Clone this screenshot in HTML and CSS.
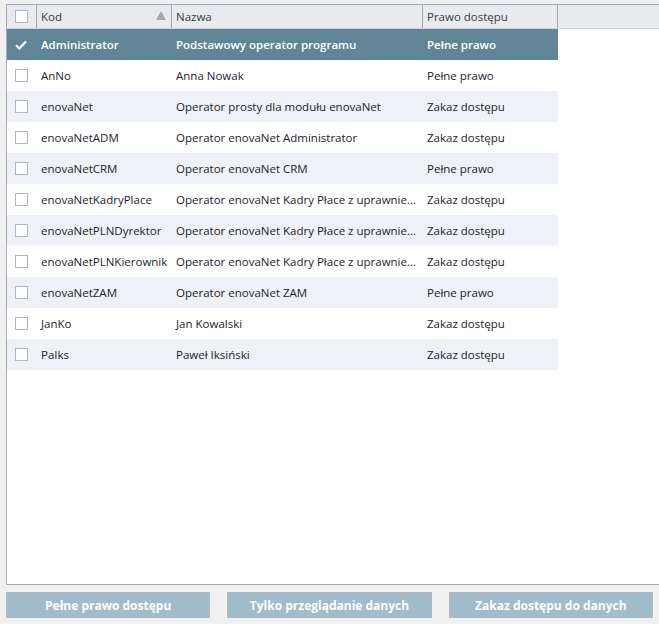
FILE: index.html
```html
<!DOCTYPE html>
<html lang="pl">
<head>
<meta charset="utf-8">
<title>Operatorzy</title>
<link rel="stylesheet" href="styles.css">
</head>
<body>
<div class="app">
  <div class="grid">
    <div class="head">
      <div class="hc c-chk"><span class="box"></span></div>
      <div class="hc c-kod">Kod<span class="sort"></span></div>
      <div class="hc c-naz">Nazwa</div>
      <div class="hc c-pra">Prawo dostępu</div>
      <div class="hc c-fill"></div>
    </div>
    <div class="body">
      <div class="row sel">
        <div class="c c-chk"><svg class="tick" width="12" height="10" viewBox="0 0 12 10"><path d="M1 5.2 L4.3 8.4 L11 1.4" fill="none" stroke="#fff" stroke-width="2.2"/></svg></div>
        <div class="c c-kod">Administrator</div>
        <div class="c c-naz">Podstawowy operator programu</div>
        <div class="c c-pra">Pełne prawo</div>
      </div>
      <div class="row">
        <div class="c c-chk"><span class="box"></span></div>
        <div class="c c-kod">AnNo</div>
        <div class="c c-naz">Anna Nowak</div>
        <div class="c c-pra">Pełne prawo</div>
      </div>
      <div class="row alt">
        <div class="c c-chk"><span class="box"></span></div>
        <div class="c c-kod">enovaNet</div>
        <div class="c c-naz">Operator prosty dla modułu enovaNet</div>
        <div class="c c-pra">Zakaz dostępu</div>
      </div>
      <div class="row">
        <div class="c c-chk"><span class="box"></span></div>
        <div class="c c-kod">enovaNetADM</div>
        <div class="c c-naz">Operator enovaNet Administrator</div>
        <div class="c c-pra">Zakaz dostępu</div>
      </div>
      <div class="row alt">
        <div class="c c-chk"><span class="box"></span></div>
        <div class="c c-kod">enovaNetCRM</div>
        <div class="c c-naz">Operator enovaNet CRM</div>
        <div class="c c-pra">Pełne prawo</div>
      </div>
      <div class="row">
        <div class="c c-chk"><span class="box"></span></div>
        <div class="c c-kod">enovaNetKadryPlace</div>
        <div class="c c-naz">Operator enovaNet Kadry Płace z uprawnieniami</div>
        <div class="c c-pra">Zakaz dostępu</div>
      </div>
      <div class="row alt">
        <div class="c c-chk"><span class="box"></span></div>
        <div class="c c-kod">enovaNetPLNDyrektor</div>
        <div class="c c-naz">Operator enovaNet Kadry Płace z uprawnieniami</div>
        <div class="c c-pra">Zakaz dostępu</div>
      </div>
      <div class="row">
        <div class="c c-chk"><span class="box"></span></div>
        <div class="c c-kod">enovaNetPLNKierownik</div>
        <div class="c c-naz">Operator enovaNet Kadry Płace z uprawnieniami</div>
        <div class="c c-pra">Zakaz dostępu</div>
      </div>
      <div class="row alt">
        <div class="c c-chk"><span class="box"></span></div>
        <div class="c c-kod">enovaNetZAM</div>
        <div class="c c-naz">Operator enovaNet ZAM</div>
        <div class="c c-pra">Pełne prawo</div>
      </div>
      <div class="row">
        <div class="c c-chk"><span class="box"></span></div>
        <div class="c c-kod">JanKo</div>
        <div class="c c-naz">Jan Kowalski</div>
        <div class="c c-pra">Zakaz dostępu</div>
      </div>
      <div class="row alt">
        <div class="c c-chk"><span class="box"></span></div>
        <div class="c c-kod">PaIks</div>
        <div class="c c-naz">Paweł Iksiński</div>
        <div class="c c-pra">Zakaz dostępu</div>
      </div>
    </div>
  </div>
  <div class="actions">
    <button class="btn">Pełne prawo dostępu</button>
    <button class="btn">Tylko przeglądanie danych</button>
    <button class="btn">Zakaz dostępu do danych</button>
  </div>
</div>
</body>
</html>
```

FILE: styles.css
```css
* { box-sizing: border-box; }
html, body { margin: 0; padding: 0; }
body {
  background: #f0f0f0;
  font-family: "Open Sans", "Noto Sans", sans-serif;
  font-size: 11.5px;
  color: #231d2c;
  width: 659px;
  height: 624px;
  overflow: hidden;
}
.app {
  display: flex;
  flex-direction: column;
  padding-top: 4px;
}
.grid {
  margin-left: 6px;
  height: 581px;
  background: #fff;
  border-top: 1px solid #a8a8b8;
  border-left: 1px solid #a8a8b8;
  border-bottom: 1px solid #a8a8b8;
  display: flex;
  flex-direction: column;
}
.head {
  display: flex;
  height: 24px;
  background: #e7eaef;
  border-bottom: 1px solid #d0d2d8;
}
.hc {
  display: flex;
  align-items: center;
  padding-left: 4px;
  border-right: 1px solid #a4a6ae;
  color: #3c3c44;
  position: relative;
}
.hc.c-fill { flex: 1; border-right: none; }
.c-chk { width: 29px; flex: none; padding-left: 8px !important; }
.c-kod { width: 135px; flex: none; }
.c-naz { width: 251px; flex: none; }
.c-pra { width: 135px; flex: none; }
.head .c-chk { width: 30px; }
.box {
  display: block;
  width: 13px;
  height: 13px;
  background: #fff;
  border: 1px solid #b4b4bc;
}
.sort {
  position: absolute;
  right: 5px;
  top: 6px;
  width: 0;
  height: 0;
  border-left: 5px solid transparent;
  border-right: 5px solid transparent;
  border-bottom: 9px solid #a8a8b0;
}
.body { display: flex; flex-direction: column; }
.row {
  display: flex;
  height: 31px;
  width: 551px;
  align-items: center;
}
.row.alt { background: #eef1f5; }
.row.sel { background: #5f8597; color: #fff; font-weight: 600; }
.c {
  padding-left: 5px;
  white-space: nowrap;
  overflow: hidden;
  text-overflow: ellipsis;
}
.row .c-naz { padding-right: 5px; }
.row .c-chk { width: 29px; display: flex; align-items: center; }
.tick { display: block; }
.actions {
  display: flex;
  gap: 17px;
  padding: 7px 6px 0 6px;
}
.btn {
  flex: 1;
  height: 26px;
  background: #a0bccd;
  border: 1px solid #b4b8bc;
  color: #fff;
  font-family: "Open Sans", "Noto Sans", sans-serif;
  font-weight: 700;
  font-size: 12px;
  padding: 0;
}
```
